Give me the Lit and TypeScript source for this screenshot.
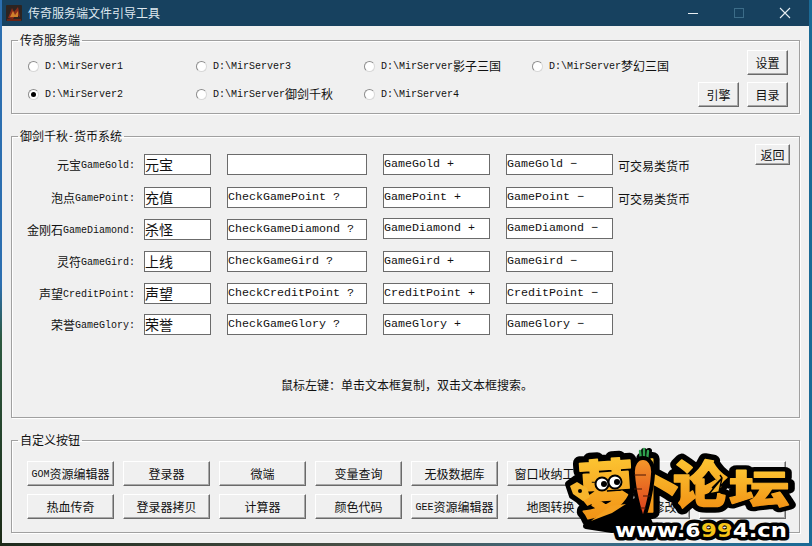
import { LitElement, html, css, svg } from "lit";
import { customElement } from "lit/decorators.js";

const mix = (t: string) => html`<span class="mx">${t
  .split(/([\x00-\x7f]+)/)
  .filter(Boolean)
  .map((p) => (/^[\x00-\x7f]+$/.test(p) ? html`<span class="la">${p}</span>` : html`<span class="zh">${p}</span>`))}</span>`;

const radios = [
  ["D:\\MirServer1", false], ["D:\\MirServer3", false], ["D:\\MirServer影子三国", false], ["D:\\MirServer梦幻三国", false],
  ["D:\\MirServer2", true], ["D:\\MirServer御剑千秋", false], ["D:\\MirServer4", false],
] as [string, boolean][];

const rows = [
  { l: "元宝GameGold:", a: "元宝", b: "", c: "GameGold +", d: "GameGold −", n: "可交易类货币" },
  { l: "泡点GamePoint:", a: "充值", b: "CheckGamePoint ?", c: "GamePoint +", d: "GamePoint −", n: "可交易类货币" },
  { l: "金刚石GameDiamond:", a: "杀怪", b: "CheckGameDiamond ?", c: "GameDiamond +", d: "GameDiamond −", n: "", up: true },
  { l: "灵符GameGird:", a: "上线", b: "CheckGameGird ?", c: "GameGird +", d: "GameGird −", n: "" },
  { l: "声望CreditPoint:", a: "声望", b: "CheckCreditPoint ?", c: "CreditPoint +", d: "CreditPoint −", n: "" },
  { l: "荣誉GameGlory:", a: "荣誉", b: "CheckGameGlory ?", c: "GameGlory +", d: "GameGlory −", n: "" },
];

const custom = [
  "GOM资源编辑器", "登录器", "微端", "变量查询", "无极数据库", "窗口收纳工具", "", "",
  "热血传奇", "登录器拷贝", "计算器", "颜色代码", "GEE资源编辑器", "地图转换", "物品表修改", "",
];

const logoText = (cls: string) => svg`
  <g class=${cls} fill="url(#lg)">
    <text class="big" transform="translate(580 513) rotate(-4) scale(.94 1.02)" font-size="60">萝</text>
    <text class="big" transform="translate(625 506)" font-size="56">卜</text>
    <text class="big" transform="translate(673 503) scale(.96 .9)" font-size="56">论</text>
    <text class="big" transform="translate(729 503) scale(1.08 .7)" font-size="56">坛</text>
  </g>`;

@customElement("app-root")
export class AppRoot extends LitElement {
  static styles = css`
    :host {
      display: block; position: relative; width: 812px; height: 546px; overflow: hidden;
      font-family: "Liberation Mono", "Noto Sans CJK SC", monospace; font-size: 12px; color: #111;
      background:
        linear-gradient(180deg, #2c6fb0 0, #2c6fb0 52%, #2d5a40 62%, #1c2a16 100%) left top / 2px 100% no-repeat,
        linear-gradient(90deg, #1e2a1c 0, #4a5148 45%, #3f6a80 70%, #1a6a96 100%);
    }
    .mx { display: inline-flex; align-items: center; height: 14px; line-height: 14px; white-space: nowrap; }
    .la { font-size: 10px; padding-top: 2px; }
    .zh { font-family: "Noto Sans CJK SC", sans-serif; }
    .win { margin-left: 2px; width: 807px; height: 543px; background: #f0f0f0; display: flex; flex-direction: column; }
    .title { height: 26px; flex: none; background: #17415f; color: #dfe8ef; display: flex; align-items: center; padding-left: 4px; gap: 6px; }
    .title .name { flex: 1; display: flex; align-items: center; height: 26px; font-size: 12px; }
    .ctl { width: 46px; height: 26px; display: flex; align-items: center; justify-content: center; }
    .ctl svg { display: block; }
    .ctls { display: flex; margin-right: 1px; }
    .body { flex: 1; padding: 7px 9px 0; display: flex; flex-direction: column; gap: 15px; }
    fieldset {
      margin: 0; padding: 0; min-width: 0; width: 789px; box-sizing: border-box;
      border: 1px solid #a0a0a0; box-shadow: 1px 1px 0 #fff, inset 1px 1px 0 #fff;
    }
    legend { margin-left: 6px; padding: 0 2px; line-height: 14px; height: 14px; font-size: 12px; display: flex; align-items: center; }
    .g1 { height: 81px; }
    .g2 { height: 289px; }
    .g3 { height: 100px; }
    .g1in { display: flex; justify-content: space-between; padding: 3px 11px 0 16px; }
    .radios { display: grid; grid-template-columns: 168px 168px 168px 168px; grid-auto-rows: 14px; row-gap: 14px; padding-top: 9px; }
    .radio { display: flex; align-items: center; gap: 6px; height: 14px; white-space: nowrap; }
    .dot {
      width: 11px; height: 11px; box-sizing: border-box; border-radius: 50%; background: #fff; flex: none;
      border: 1px solid #8c8c8c; border-right-color: #d8d8d8; border-bottom-color: #d8d8d8;
      display: flex; align-items: center; justify-content: center;
    }
    .dot.on::after { content: ""; width: 5px; height: 5px; border-radius: 50%; background: #000; }
    .sidebtns { display: grid; grid-template-columns: 41px 41px; grid-auto-rows: 25px; column-gap: 8px; row-gap: 7px; margin-left: -41px; }
    .btn {
      box-sizing: border-box; background: #f0f0f0; border: 1px solid; border-color: #fff #6a6a6a #6a6a6a #fff;
      box-shadow: inset -1px -1px 0 #a8a8a8; display: flex; align-items: center; justify-content: center;
      font-size: 12px; white-space: nowrap; line-height: 14px; color: #111;
    }
    .side2 { grid-column: 2; }
    .form {
      display: grid; padding-top: 11px; align-items: start;
      grid-template-columns: 123px 76px 156px 123px 123px 142px 35px;
      grid-template-rows: 33px 32px 32px 32px 31px 21px;
    }
    .lab { grid-column: 1; justify-self: end; display: flex; align-items: center; height: 21px; }
    .note { display: flex; align-items: center; height: 21px; padding: 1px 0 0 5px; }
    input {
      box-sizing: border-box; height: 21px; margin: 0; padding: 0 0 1px; background: #fff; outline: none;
      border: 1px solid #6b6b6b; border-radius: 0; color: #111;
      font-family: "Liberation Mono", "Noto Sans CJK SC", monospace; font-size: 11.67px;
    }
    input.cn { font-family: "Noto Sans CJK SC", sans-serif; font-size: 14px; padding-bottom: 1px; }
    .fa { width: 67px; margin-left: 9px; }
    .fb { width: 140px; margin-left: 16px; }
    .fc { width: 107px; margin-left: 16px; }
    .up { margin-top: -1px; }
    .back { grid-column: 7; grid-row: 1; width: 35px; height: 21px; margin-top: -10px; }
    .hint { padding: 43px 0 0 269px; display: flex; line-height: 14px; white-space: nowrap; }
    .grid3 { display: grid; grid-template-columns: repeat(8, 87px); grid-auto-rows: 25px; column-gap: 9px; row-gap: 8px; padding: 14px 0 0 15px; }
    .logo { position: absolute; left: 560px; top: 436px; width: 252px; height: 110px; display: block; }
    .big { font-family: "Noto Sans CJK SC", sans-serif; font-weight: 900; }
    .under { stroke: #000; stroke-width: 14px; stroke-linejoin: round; }
    .over { stroke: url(#lg); stroke-width: 1.6px; stroke-linejoin: round; }
    .url { font-family: "DejaVu Sans", sans-serif; font-weight: 700; font-size: 20px; paint-order: stroke; stroke: #000; stroke-width: 7px; stroke-linejoin: round; fill: #fff; }
  `;

  render() {
    return html`<div class="win">
      <div class="title">
        <svg width="16" height="16" viewBox="0 0 16 16">
          <rect width="16" height="16" rx="1" fill="#2e2420"/>
          <path d="M2 13 L6 3 L8 7 L12 2 L14 12 L10 9 L7 14 Z" fill="#8a2c1a"/>
          <path d="M4 12 L7 6 L9 10 L12 6 L12 12 Z" fill="#d0802c"/>
          <path d="M1 14 H15 V16 H1 Z" fill="#6a2416"/>
        </svg>
        <span class="name">${mix("传奇服务端文件引导工具")}</span>
        <div class="ctls">
          <div class="ctl"><svg width="12" height="12" viewBox="0 0 12 12"><path d="M1 6.5H11" stroke="#e8eef2" stroke-width="1"/></svg></div>
          <div class="ctl"><svg width="12" height="12" viewBox="0 0 12 12"><rect x="1.5" y="1.5" width="9" height="9" fill="none" stroke="#3c6c88"/></svg></div>
          <div class="ctl"><svg width="12" height="12" viewBox="0 0 12 12"><path d="M1 1L11 11M11 1L1 11" stroke="#e8eef2" stroke-width="1.1"/></svg></div>
        </div>
      </div>
      <div class="body">
        <fieldset class="g1">
          <legend>${mix("传奇服务端")}</legend>
          <div class="g1in">
            <div class="radios">
              ${radios.map(([t, on]) => html`<div class="radio"><span class="dot ${on ? "on" : ""}"></span>${mix(t)}</div>`)}
            </div>
            <div class="sidebtns">
              <div class="btn side2">${mix("设置")}</div>
              <div class="btn">${mix("引擎")}</div>
              <div class="btn">${mix("目录")}</div>
            </div>
          </div>
        </fieldset>
        <fieldset class="g2">
          <legend>${mix("御剑千秋-货币系统")}</legend>
          <div class="form">
            ${rows.map((r) => html`
              <div class="lab">${mix(r.l)}</div>
              <input class="fa cn" readonly value=${r.a} />
              <input class="fb" readonly value=${r.b} />
              <input class="fc ${r.up ? "up" : ""}" readonly value=${r.c} />
              <input class="fc ${r.up ? "up" : ""}" readonly value=${r.d} />
              <div class="note">${r.n ? mix(r.n) : ""}</div>
            `)}
            <div class="btn back">${mix("返回")}</div>
          </div>
          <div class="hint">${mix("鼠标左键\uFF1A单击文本框复制\uFF0C双击文本框搜索。")}</div>
        </fieldset>
        <fieldset class="g3">
          <legend>${mix("自定义按钮")}</legend>
          <div class="grid3">
            ${custom.map((t) => html`<div class="btn">${t ? mix(t) : ""}</div>`)}
          </div>
        </fieldset>
      </div>
    </div>
    <svg class="logo" viewBox="560 436 252 110">
      <defs>
        <linearGradient id="lg" x1="0" y1="0" x2="0" y2="1">
          <stop offset="0" stop-color="#ffd23a"/><stop offset="1" stop-color="#f08a10"/>
        </linearGradient>
        <linearGradient id="cg" x1="0" y1="0" x2="0" y2="1">
          <stop offset="0" stop-color="#f59a2a"/><stop offset="1" stop-color="#d9341a"/>
        </linearGradient>
      </defs>
      ${logoText("under")}
      <path d="M568 484 l8 -6 l12 6 l4 14 l-8 6 l-12 -8 z" fill="#000" stroke="#000" stroke-width="6" stroke-linejoin="round"/>
      <path d="M586 526 L608 508 L640 500 L650 524 L612 530 Z" fill="#000" stroke="#000" stroke-width="6" stroke-linejoin="round"/>
      ${logoText("over")}
      <path d="M591 521 L610 506 L626 504 L612 513 L604 516 Z" fill="#f4a020"/>
      <path d="M570 486 L577 482 L587 488 L590 497 L583 501 L573 494 Z" fill="#f7b52c"/>
      <circle cx="580" cy="491" r="2" fill="#000"/>
      <path d="M644 451 L640 461 M644 451 L644 461 M649 451 L647 461" stroke="#000" stroke-width="6" stroke-linecap="round"/>
      <path d="M640 451 L641 460 M644 449 L644 460 M648 451 L647 460" stroke="#2fa24f" stroke-width="2.4" stroke-linecap="round"/>
      <path d="M643 458 C637 458 632 464 633 474 C634 490 639 510 643 520 C647 510 652 490 653 474 C654 464 649 458 643 458 Z"
        fill="url(#cg)" stroke="#000" stroke-width="4" stroke-linejoin="round"/>
      <path d="M634 475 H646 M634 489 H642 M643 496 H650 M640 508 H646" stroke="#4a1606" stroke-width="1"/>
      <circle cx="602" cy="484" r="6.5" fill="#fff" stroke="#000" stroke-width="2"/>
      <circle cx="615" cy="482" r="6.5" fill="#fff" stroke="#000" stroke-width="2"/>
      <circle cx="604" cy="484" r="3" fill="#000"/>
      <circle cx="617" cy="482" r="3" fill="#000"/>
      <path d="M712 488 L722 478 L720 475 M722 478 L719 492 L709 494 Z" fill="#f7b52c" stroke="#000" stroke-width="1.4" stroke-linejoin="round"/>
      <text class="url" x="615" y="537" textLength="172" lengthAdjust="spacingAndGlyphs">www.6<tspan fill="#f5c518">99</tspan>4.cn</text>
    </svg>`;
  }
}
